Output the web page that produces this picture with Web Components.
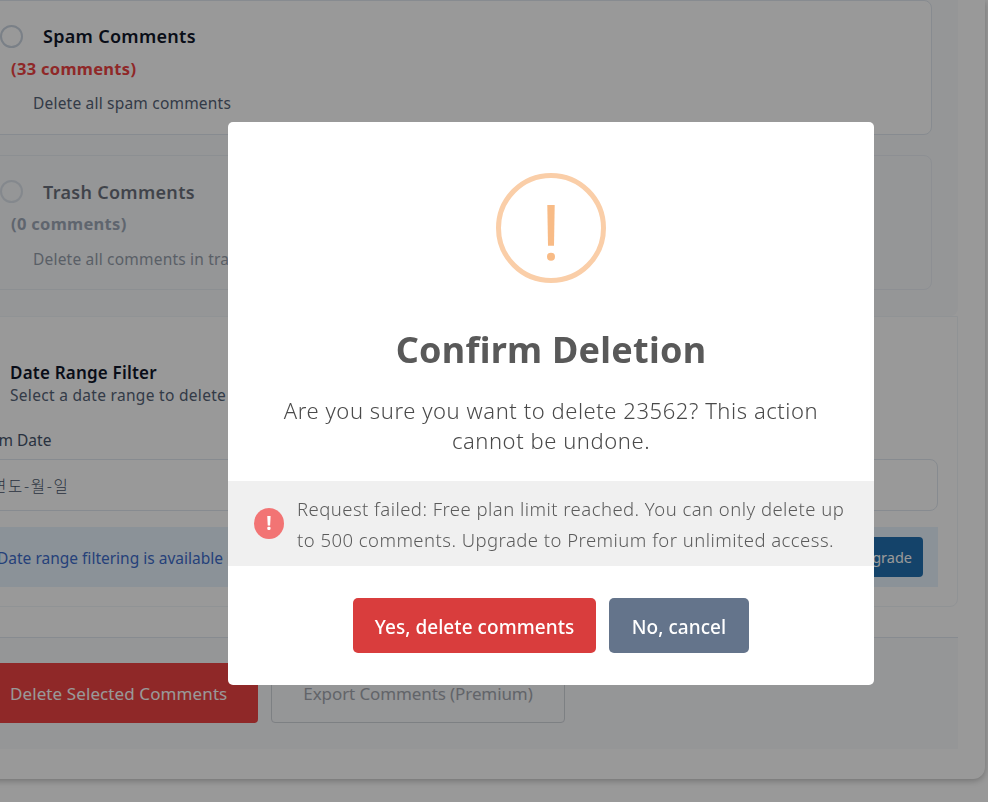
<!DOCTYPE html>
<html lang="en">
<head>
<meta charset="utf-8">
<title>Confirm Deletion</title>
<style>
    html, body { margin: 0; height: 100%; overflow: hidden; background: #fff; }
    body { font-family: "Noto Sans", "Noto Sans CJK KR", sans-serif; color: #1e293b; }
</style>
</head>
<body>
<app-shell>
    <option-panel>
        <option-card label="Spam Comments" count="(33 comments)" tone="#ef4444" note="Delete all spam comments"></option-card>
        <option-card disabled label="Trash Comments" count="(0 comments)" tone="#64748b" note="Delete all comments in trash"></option-card>
    </option-panel>
    <date-filter></date-filter>
    <action-bar></action-bar>
</app-shell>
<confirm-modal>
    <span slot="title">Confirm Deletion</span>
    <span slot="text">Are you sure you want to delete 23562? This action cannot be undone.</span>
    <span slot="error">Request failed: Free plan limit reached. You can only delete up to 500 comments. Upgrade to Premium for unlimited access.</span>
</confirm-modal>
<script>
class AppShell extends HTMLElement {
    constructor() {
        super();
        const shadow = this.attachShadow({ mode: 'open' });
        shadow.innerHTML = `
            <style>
                :host {
                    display: block;
                    box-sizing: border-box;
                    width: 1025px;
                    height: 779px;
                    margin-left: -40px;
                    padding-right: 27px;
                    background: #fff;
                    border-radius: 0 0 12px 12px;
                    box-shadow: 0 2px 6px rgba(0, 0, 0, .25);
                }
            </style>
            <slot></slot>
        `;
    }
}

class OptionPanel extends HTMLElement {
    constructor() {
        super();
        const shadow = this.attachShadow({ mode: 'open' });
        shadow.innerHTML = `
            <style>
                :host {
                    display: flex;
                    flex-direction: column;
                    gap: 20px;
                    height: 316px;
                    box-sizing: border-box;
                    padding-right: 26px;
                    background: #f8fafc;
                    border-radius: 0 0 8px 8px;
                }
            </style>
            <slot></slot>
        `;
    }
}

class OptionCard extends HTMLElement {
    constructor() {
        super();
        const shadow = this.attachShadow({ mode: 'open' });
        const off = this.hasAttribute('disabled');
        shadow.innerHTML = `
            <style>
                :host {
                    display: block;
                    box-sizing: border-box;
                    height: 135px;
                    padding: 20px 0 0 39px;
                    background: ${off ? 'transparent' : '#fff'};
                    border: 1px solid #e2e8f0;
                    border-radius: 8px;
                    opacity: ${off ? '.6' : '1'};
                }
                .head { display: flex; align-items: center; gap: 20px; height: 30px; }
                .radio {
                    box-sizing: border-box;
                    width: 23px;
                    height: 23px;
                    border: 2px solid #cbd5e1;
                    border-radius: 50%;
                }
                .label { font-size: 18px; font-weight: 600; letter-spacing: .3px; color: #0f172a; margin-top: ${off ? '2px' : '0'}; }
                .count { margin: 6px 0 0 11px; height: 24px; line-height: 24px; font-size: 16.5px; font-weight: 700; letter-spacing: .3px; color: ${this.getAttribute('tone')}; }
                .note { margin: ${off ? '11px' : '10px'} 0 0 33px; font-size: 15.5px; line-height: 24px; letter-spacing: .2px; color: #556377; }
            </style>
            <div class="head"><span class="radio"></span><span class="label">${this.getAttribute('label')}</span></div>
            <div class="count">${this.getAttribute('count')}</div>
            <div class="note">${this.getAttribute('note')}</div>
        `;
    }
}

class DateFilter extends HTMLElement {
    constructor() {
        super();
        const shadow = this.attachShadow({ mode: 'open' });
        shadow.innerHTML = `
            <style>
                :host {
                    display: block;
                    box-sizing: border-box;
                    height: 291px;
                    padding: 45px 19px 0 49px;
                    background: #fff;
                    border: 1px solid #f1f5f9;
                    border-radius: 0 0 8px 8px;
                }
                h3 { margin: 0; font-size: 17px; line-height: 22px; font-weight: 600; letter-spacing: .2px; color: #0f172a; }
                p { margin: 0; font-size: 15.5px; line-height: 22px; letter-spacing: .3px; color: #556377; }
                label { display: block; margin: 22px 0 0 -35px; font-size: 15.5px; line-height: 24px; color: #44536a; }
                .field {
                    box-sizing: border-box;
                    height: 52px;
                    margin: 7px 0 0 -50px;
                    padding: 0 0 0 31px;
                    display: flex;
                    align-items: center;
                    font-size: 15.5px;
                    letter-spacing: 1.7px;
                    font-family: "Noto Sans CJK KR", sans-serif;
                    font-weight: 300;
                    color: #475569;
                    border: 1px solid #e2e8f0;
                    border-radius: 8px;
                }
                .notice {
                    box-sizing: border-box;
                    height: 60px;
                    margin: 16px 0 0 -50px;
                    padding: 2px 15px 0 37px;
                    display: flex;
                    align-items: center;
                    justify-content: space-between;
                    background: #e8f4fd;
                    font-size: 15.5px;
                    color: #3f6dcc;
                }
                .upgrade {
                    height: 40px;
                    line-height: 40px;
                    margin-top: -2px;
                    padding: 0 11px;
                    background: #2271b1;
                    color: #fff;
                    font-size: 14.5px;
                    border-radius: 4px;
                }
            </style>
            <h3>Date Range Filter</h3>
            <p>Select a date range to delete comments from</p>
            <label>From Date</label>
            <div class="field">연도-월-일</div>
            <div class="notice"><span>Date range filtering is available in premium</span><span class="upgrade">Upgrade</span></div>
        `;
    }
}

class ActionBar extends HTMLElement {
    constructor() {
        super();
        const shadow = this.attachShadow({ mode: 'open' });
        shadow.innerHTML = `
            <style>
                :host {
                    display: flex;
                    align-items: flex-start;
                    gap: 13px;
                    box-sizing: border-box;
                    height: 112px;
                    margin-top: 30px;
                    padding: 25px 0 0 0;
                    background: #f8fafc;
                    border-top: 1px solid #e2e8f0;
                }
                .btn {
                    box-sizing: border-box;
                    height: 60px;
                    display: flex;
                    align-items: center;
                    font-size: 17px;
                    border-radius: 4px;
                }
                .del { width: 298px; padding-left: 50px; background: #ef4444; color: #fff; letter-spacing: .1px; }
                .exp { width: 294px; justify-content: center; border: 1px solid #d1d5db; color: #a3a7af; background: #f8fafc; letter-spacing: -.1px; }
            </style>
            <div class="btn del">Delete Selected Comments</div>
            <div class="btn exp">Export Comments (Premium)</div>
        `;
    }
}

class ConfirmModal extends HTMLElement {
    constructor() {
        super();
        const shadow = this.attachShadow({ mode: 'open' });
        const tpl = document.createElement('template');
        tpl.innerHTML = `
            <style>
                :host {
                    position: fixed;
                    inset: 0;
                    display: flex;
                    align-items: flex-start;
                    justify-content: flex-start;
                    padding: 122px 0 0 228px;
                    background: rgba(0, 0, 0, .4);
                }
                .box {
                    box-sizing: border-box;
                    width: 646px;
                    height: 563px;
                    background: #fff;
                    border-radius: 5px;
                    display: flex;
                    flex-direction: column;
                    align-items: center;
                }
                .icon { display: block; width: 110px; height: 110px; margin-top: 51px; }
                h2 { margin: 37px 0 0; font-size: 36px; line-height: 60px; font-weight: 700; letter-spacing: .25px; color: #595959; text-align: center; }
                .text { margin: 15px 0 0; width: 560px; font-size: 22px; line-height: 30px; font-weight: 300; letter-spacing: .56px; color: #4a4a4a; text-align: center; }
                .error {
                    box-sizing: border-box;
                    align-self: stretch;
                    height: 85px;
                    margin-top: 26px;
                    padding: 0 26px;
                    display: flex;
                    align-items: center;
                    gap: 13px;
                    background: #f0f0f0;
                    font-size: 18.5px;
                    line-height: 31px;
                    font-weight: 300;
                    letter-spacing: .46px;
                    color: #5c5c5c;
                }
                .mark {
                    flex: none;
                    width: 30px;
                    height: 31px;
                    line-height: 31px;
                    border-radius: 50%;
                    background: #f27474;
                    color: #fff;
                    font-weight: 700;
                    font-size: 19px;
                    letter-spacing: 0;
                    text-align: center;
                }
                .buttons { display: flex; gap: 13px; margin-top: 32px; }
                button {
                    height: 55px;
                    border: 0;
                    border-radius: 5px;
                    padding: 2px 0 0;
                    color: #fff;
                    font: 500 19px "Noto Sans", "Noto Sans CJK KR", sans-serif;
                    letter-spacing: .05px;
                }
                .yes { width: 243px; background: #d93d3d; }
                .no { width: 140px; background: #64748b; }
            </style>
            <div class="box">
                <svg class="icon" viewBox="0 0 110 110" aria-hidden="true">
                    <circle cx="55" cy="55" r="52.5" fill="none" stroke="#facea8" stroke-width="5"/>
                    <path d="M51.3 32h7.4l-.7 40.7h-6z" fill="#f8bb86"/>
                    <circle cx="55" cy="83.7" r="4" fill="#f8bb86"/>
                </svg>
                <h2><slot name="title"></slot></h2>
                <div class="text"><slot name="text"></slot></div>
                <div class="error"><span class="mark">!</span><span><slot name="error"></slot></span></div>
                <div class="buttons">
                    <button class="yes">Yes, delete comments</button>
                    <button class="no">No, cancel</button>
                </div>
            </div>
        `;
        shadow.appendChild(tpl.content.cloneNode(true));
    }
}

customElements.define('app-shell', AppShell);
customElements.define('option-panel', OptionPanel);
customElements.define('option-card', OptionCard);
customElements.define('date-filter', DateFilter);
customElements.define('action-bar', ActionBar);
customElements.define('confirm-modal', ConfirmModal);
</script>
</body>
</html>
